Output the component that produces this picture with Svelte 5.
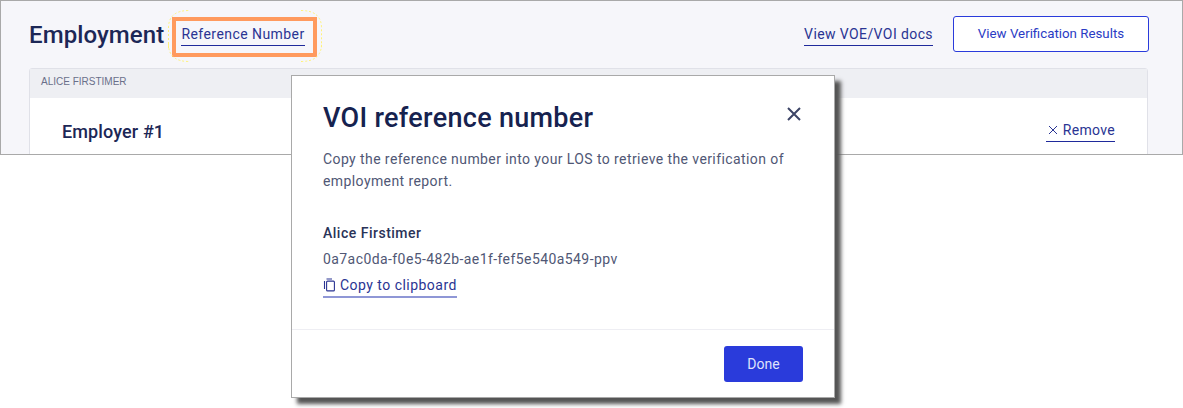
<script>
  const name = "Alice Firstimer";
  const refNumber = "0a7ac0da-f0e5-482b-ae1f-fef5e540a549-ppv";
</script>

<div class="page">
  <section class="frame">
    <header class="top">
      <div class="heading">
        <h1>Employment</h1>
        <div class="callout">
          <svg class="sparkle" width="154" height="52" viewBox="0 0 154 52" aria-hidden="true">
            <path d="M.5 38V18Q.5 .5 21 .5M133 .5Q153.5 .5 153.5 18V38M.5 34Q.5 51.5 21 51.5M133 51.5Q153.5 51.5 153.5 34" />
          </svg>
          <a class="link ref" href="#ref">Reference Number</a>
        </div>
      </div>
      <div class="actions">
        <a class="link docs" href="#docs">View VOE/VOI docs</a>
        <button class="outline">View Verification Results</button>
      </div>
    </header>

    <div class="panel">
      <div class="panel-head">ALICE FIRSTIMER</div>
      <div class="panel-body">
        <h2>Employer #1</h2>
        <a class="link remove" href="#remove">
          <svg width="10" height="10" viewBox="0 0 10 10" aria-hidden="true">
            <path d="M1 1l8 8M9 1l-8 8" />
          </svg>
          Remove
        </a>
      </div>
    </div>
  </section>

  <div class="modal">
    <div class="modal-main">
      <div class="modal-title">
        <h3>VOI reference number</h3>
        <button class="close" aria-label="Close">
          <svg width="16" height="16" viewBox="0 0 16 16" aria-hidden="true">
            <path d="M2 2l12 12M14 2L2 14" />
          </svg>
        </button>
      </div>
      <p class="intro">Copy the reference number into your LOS to retrieve the verification of employment report.</p>
      <div class="person">{name}</div>
      <div class="number">{refNumber}</div>
      <a class="copy" href="#copy">
        <svg width="13" height="14" viewBox="0 0 13 14" aria-hidden="true">
          <path d="M3.5 1H9M1.5 3v8" />
          <rect x="3.6" y="3.1" width="7.8" height="9.8" rx="1" />
        </svg>
        Copy to clipboard
      </a>
    </div>
    <div class="modal-foot">
      <button class="primary">Done</button>
    </div>
  </div>
</div>

<style>
  :global(body) {
    background: #fff;
    font-family: Roboto, "Liberation Sans", sans-serif;
  }

  .page {
    position: relative;
    width: 1183px;
    height: 408px;
    overflow: hidden;
  }

  .frame {
    box-sizing: border-box;
    height: 155px;
    padding: 0 33px 0 28px;
    border: 1px solid #a9a9a9;
    background: #f6f6fa;
    overflow: hidden;
  }

  .top {
    display: flex;
    justify-content: space-between;
    align-items: center;
    height: 67px;
  }

  .heading {
    display: flex;
    align-items: center;
    gap: 8px;
  }

  h1 {
    margin: 0;
    font-size: 24px;
    font-weight: 500;
    color: #1c2756;
    letter-spacing: 0.1px;
  }

  .callout {
    position: relative;
    box-sizing: border-box;
    width: 145px;
    height: 40px;
    margin-top: 4px;
    padding-left: 5px;
    border: 4px solid #ff9a5e;
    display: flex;
    align-items: center;
  }

  .sparkle {
    position: absolute;
    left: -8px;
    top: -11px;
    fill: none;
    stroke: #fff27a;
    stroke-dasharray: 2 2;
  }

  .link {
    color: #2a3493;
    font-size: 14px;
    letter-spacing: 0.44px;
    text-decoration: none;
    border-bottom: 1px solid #1f2a9b;
    padding-bottom: 3px;
    white-space: nowrap;
  }

  .ref {
    margin-bottom: 2px;
  }

  .actions {
    display: flex;
    align-items: center;
    gap: 20px;
    margin-top: -2px;
  }

  .docs {
    margin-top: 4px;
    letter-spacing: 0.4px;
  }

  .outline {
    box-sizing: border-box;
    width: 196px;
    height: 36px;
    background: #fff;
    border: 1px solid #2a3bdb;
    border-radius: 3px;
    color: #2a3bc4;
    font: 400 13.3px Roboto, sans-serif;
  }

  .panel {
    box-sizing: border-box;
    margin-right: 1px;
    border: 1px solid #e0e1e8;
    border-radius: 3px 3px 0 0;
    background: #fff;
    height: 120px;
  }

  .panel-head {
    height: 29px;
    padding: 0 0 4px 11px;
    box-sizing: border-box;
    display: flex;
    align-items: center;
    background: #eeeff3;
    color: #6a6f8a;
    font: 400 10px "Liberation Sans", Arial, sans-serif;
  }

  .panel-body {
    display: flex;
    justify-content: space-between;
    align-items: center;
    padding: 23px 32px 0;
  }

  h2 {
    margin: 0;
    font-size: 18px;
    font-weight: 500;
    color: #1c2756;
    letter-spacing: 0.12px;
  }

  .remove {
    letter-spacing: 0.3px;
  }

  .remove svg {
    margin: 0 1px 0 2px;
    fill: none;
    stroke: #2a3493;
    stroke-width: 1;
  }

  .modal {
    position: absolute;
    left: 291px;
    top: 75px;
    box-sizing: border-box;
    width: 544px;
    height: 323px;
    background: #fff;
    border: 1px solid #a9a9a9;
    box-shadow: 6px 6px 4px #555;
    display: flex;
    flex-direction: column;
  }

  .modal-main {
    flex: 1;
    padding: 26px 31px 0;
    border-bottom: 1px solid #eeeef3;
  }

  .modal-title {
    display: flex;
    justify-content: space-between;
    align-items: center;
  }

  h3 {
    margin: 0;
    font-size: 27px;
    font-weight: 500;
    color: #16224f;
    letter-spacing: 0.3px;
  }

  .close {
    padding: 0;
    border: 0;
    background: none;
    display: flex;
    margin: -9px 1px 0 0;
  }

  .close svg {
    fill: none;
    stroke: #3c4466;
    stroke-width: 2;
  }

  .intro {
    margin: 14px 0 0;
    max-width: 480px;
    font-size: 14px;
    line-height: 22px;
    letter-spacing: 0.41px;
    color: #505775;
  }

  .person {
    margin-top: 33px;
    font-size: 14px;
    font-weight: 500;
    letter-spacing: 0.5px;
    color: #2a3358;
  }

  .number {
    margin-top: 10px;
    font-size: 14px;
    letter-spacing: 0.42px;
    color: #505775;
  }

  .copy {
    display: inline-flex;
    align-items: center;
    gap: 4px;
    margin-top: 10px;
    padding-bottom: 3px;
    border-bottom: 2px solid #8f97d6;
    color: #2a3493;
    font-size: 14px;
    letter-spacing: 0.47px;
    text-decoration: none;
  }

  .copy svg {
    fill: none;
    stroke: #2a3493;
    stroke-width: 1.1;
  }

  .modal-foot {
    height: 67px;
    padding: 1px 31px 0 0;
    box-sizing: border-box;
    display: flex;
    justify-content: flex-end;
    align-items: center;
  }

  .primary {
    width: 79px;
    height: 36px;
    background: #2a3bdb;
    border: 0;
    border-radius: 3px;
    color: #dfe2fb;
    font: 400 14px Roboto, sans-serif;
  }
</style>
